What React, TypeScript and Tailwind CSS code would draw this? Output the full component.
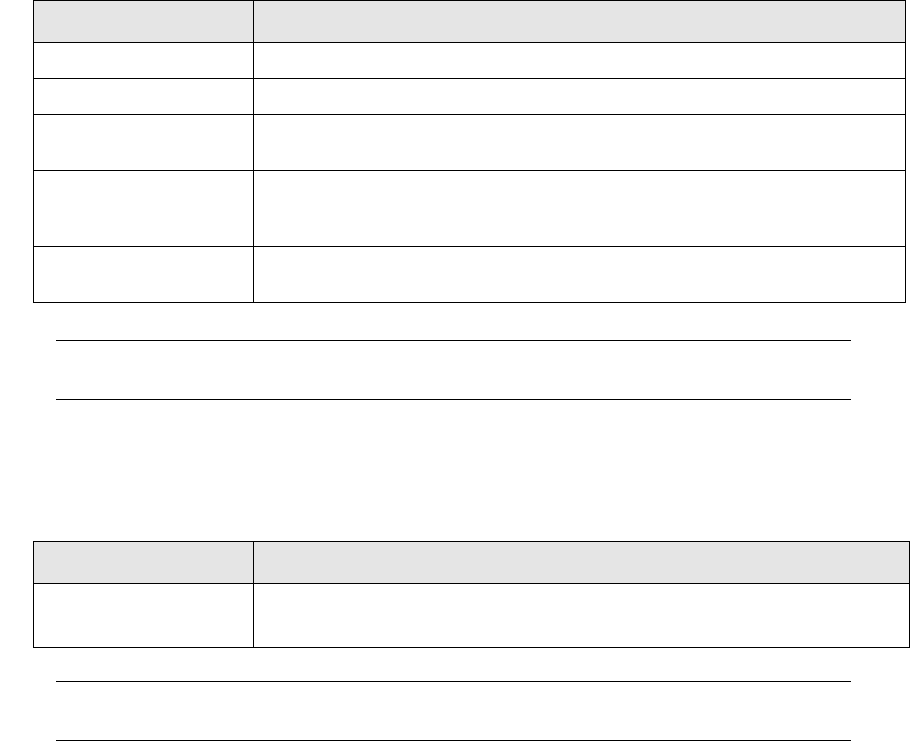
import React from "react";

function Row({ h, header = false, top = true }: { h: string; header?: boolean; top?: boolean }) {
  return (
    <div className={`flex ${top ? "border-t border-black" : ""} ${header ? "bg-[#e5e5e5]" : ""}`}>
      <div className={`w-[220px] shrink-0 border-r border-black ${h}`} />
      <div className={`flex-1 ${h}`} />
    </div>
  );
}

export default function App() {
  return (
    <div className="bg-white w-[910px] h-[746px] overflow-hidden" style={{ fontFamily: '"Liberation Sans", Arial, sans-serif' }}>
      <div className="ml-[33px] w-[873px] border border-black">
        <Row h="h-[41px]" header top={false} />
        <Row h="h-[35px]" />
        <Row h="h-[35px]" />
        <Row h="h-[55px]" />
        <Row h="h-[75px]" />
        <Row h="h-[55px]" />
      </div>
      <div className="ml-[56px] mt-[37px] w-[795px] border-y border-black h-[60px]" />
      <div className="ml-[33px] mt-[141px] w-[877px] border border-black">
        <Row h="h-[41px]" header top={false} />
        <Row h="h-[63px]" />
      </div>
      <div className="ml-[56px] mt-[33px] w-[795px] border-y border-black h-[60px]" />
    </div>
  );
}
